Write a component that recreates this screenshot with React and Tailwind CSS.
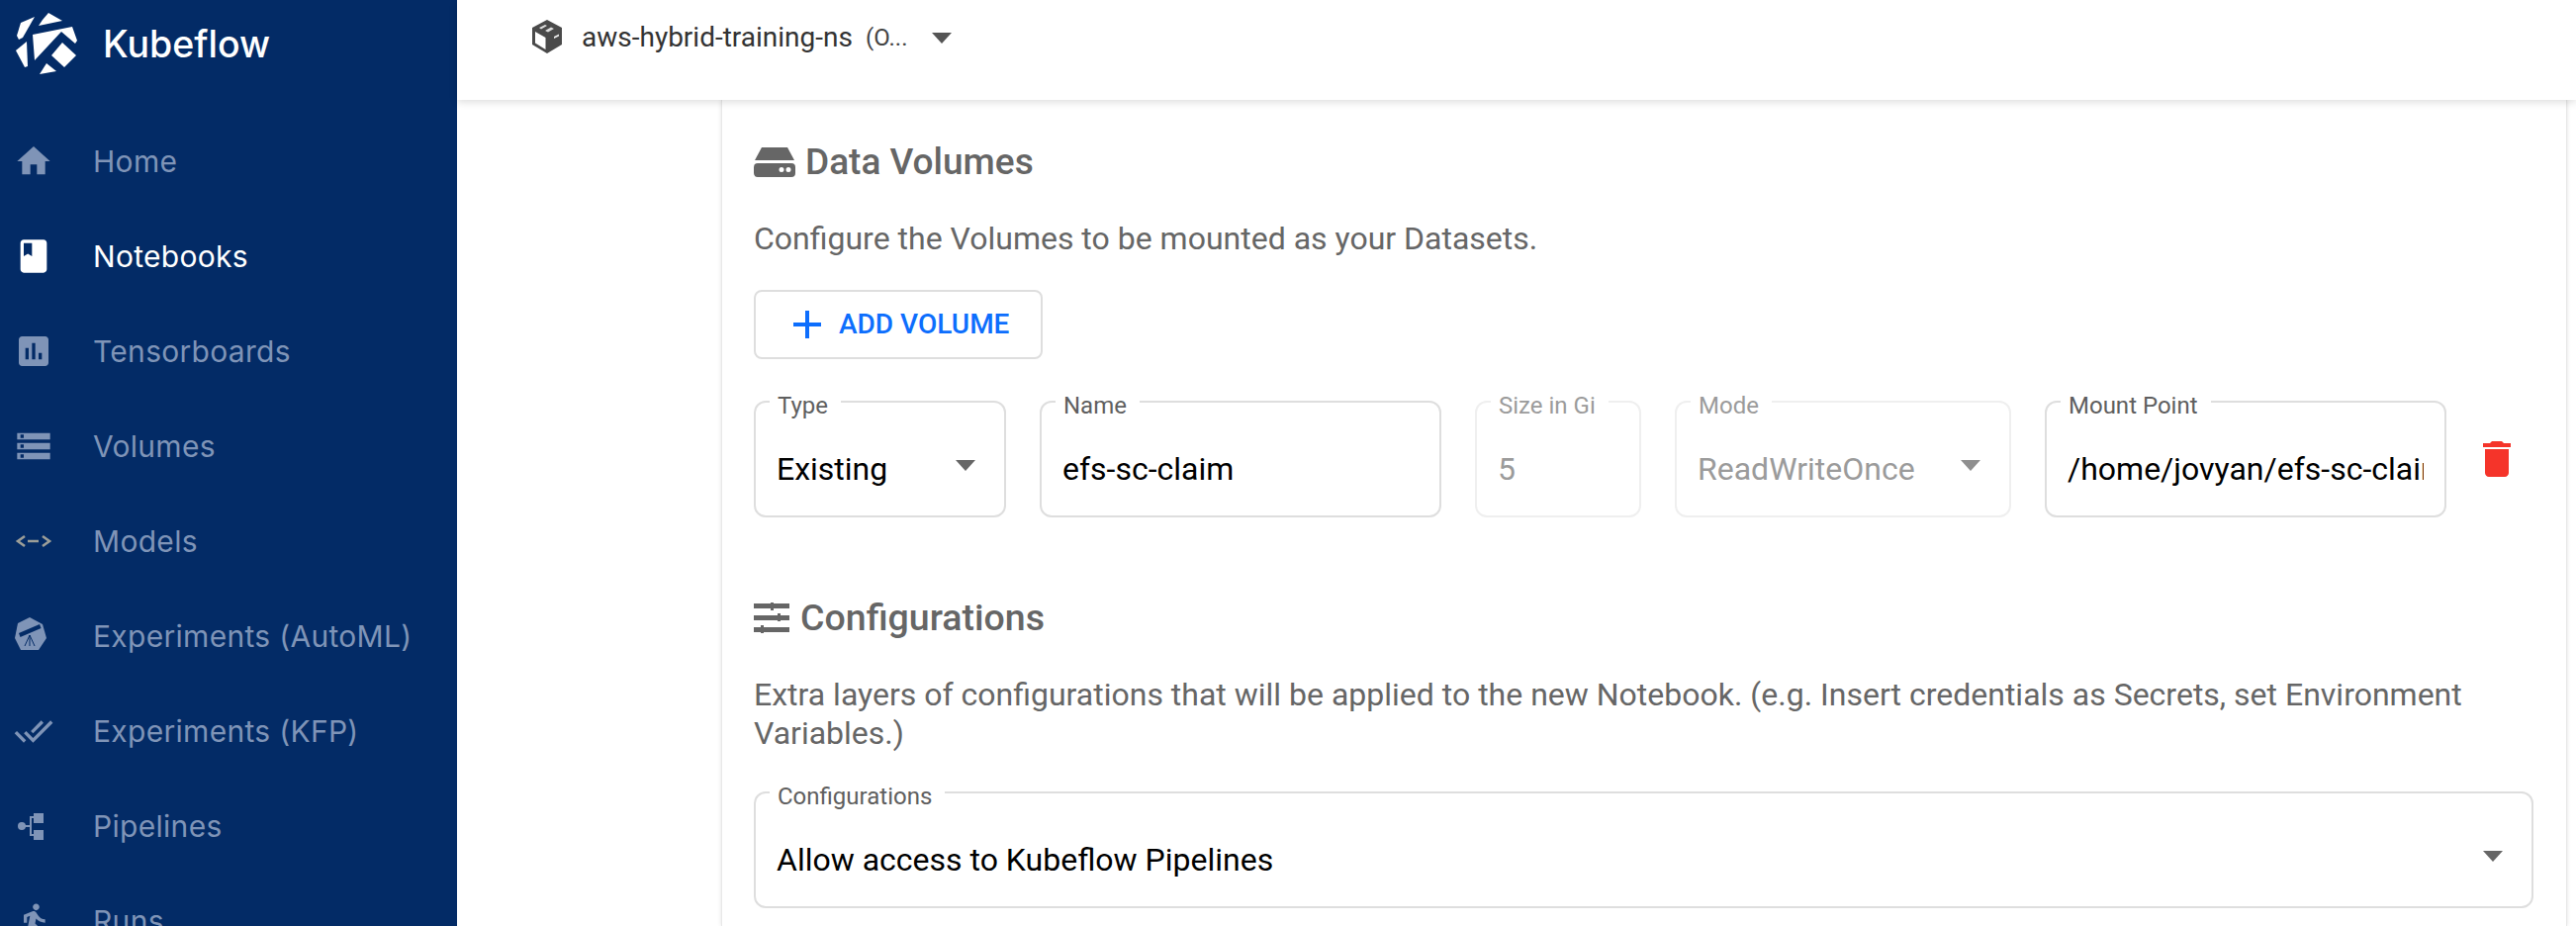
const navItems = [
  { label: 'Home', icon: 'home' },
  { label: 'Notebooks', icon: 'book', active: true },
  { label: 'Tensorboards', icon: 'assessment' },
  { label: 'Volumes', icon: 'storage' },
  { label: 'Models', icon: 'models' },
  { label: 'Experiments (AutoML)', icon: 'telescope' },
  { label: 'Experiments (KFP)', icon: 'doneAll' },
  { label: 'Pipelines', icon: 'pipelines' },
  { label: 'Runs', icon: 'walk' },
]

function NavIcon({ name }) {
  if (name === 'home') return <svg viewBox="0 0 24 24" fill="currentColor" className="w-10 h-10"><path d="M10 20v-6h4v6h5v-8h3L12 3 2 12h3v8z" /></svg>
  if (name === 'book') return <svg viewBox="0 0 24 24" fill="currentColor" fillRule="evenodd" className="w-10 h-10"><path d="M18 2H6c-1.1 0-2 .9-2 2v16c0 1.1.9 2 2 2h12c1.1 0 2-.9 2-2V4c0-1.1-.9-2-2-2zM6 4h5v8l-2.5-1.5L6 12V4z" /></svg>
  if (name === 'assessment') return <svg viewBox="0 0 24 24" fill="currentColor" className="w-10 h-10"><path d="M19 3H5c-1.1 0-2 .9-2 2v14c0 1.1.9 2 2 2h14c1.1 0 2-.9 2-2V5c0-1.1-.9-2-2-2zM9 17H7v-7h2v7zm4 0h-2V7h2v10zm4 0h-2v-4h2v4z" /></svg>
  if (name === 'storage') return <svg viewBox="0 0 24 24" fill="currentColor" className="w-10 h-10"><path d="M2 20h20v-4H2v4zm2-3h2v2H4v-2zM2 4v4h20V4H2zm4 3H4V5h2v2zm-4 7h20v-4H2v4zm2-3h2v2H4v-2z" /></svg>
  if (name === 'models') {
    return (
      <svg viewBox="0 0 40 40" fill="none" stroke="#9c9e98" strokeWidth="2.6" className="w-10 h-10">
        <path d="M11 15l-7 5 7 5M14 20h11M29 15l7 5-7 5" />
      </svg>
    )
  }
  if (name === 'telescope') {
    return (
      <svg viewBox="0 0 40 40" className="w-10 h-10">
        <path d="M16 1l13 7 4 14-8 12H7L1 22 4 7z" fill="currentColor" />
        <path d="M5 17l21-9 1.500 4-21 9z" fill="#032b66" />
        <path d="M16 19l-5 11M16 19v11M16 19l5 11" stroke="#032b66" strokeWidth="1" fill="none" />
      </svg>
    )
  }
  if (name === 'doneAll') return <svg viewBox="0 0 24 24" fill="currentColor" className="w-10 h-10"><path d="M18 7l-1.41-1.41-6.34 6.34 1.41 1.41L18 7zm4.24-1.41L11.66 16.17 7.48 12l-1.41 1.41L11.66 19l12-12-1.42-1.41zM.41 13.41L6 19l1.41-1.41L1.83 12 .41 13.41z" /></svg>
  if (name === 'pipelines') {
    return (
      <svg viewBox="0 0 40 40" fill="currentColor" className="w-10 h-10">
        <circle cx="8" cy="20" r="4" />
        <path d="M20 7h10v10H20zM20 24h10v10H20z" />
        <path d="M10 19h6v-9h5v2h-3v16h3v2h-5v-9h-6z" />
      </svg>
    )
  }
  return <svg viewBox="0 0 24 24" fill="currentColor" className="w-10 h-10"><path d="M13.49 5.48c1.1 0 2-.9 2-2s-.9-2-2-2-2 .9-2 2 .9 2 2 2zm-3.6 13.9l1-4.4 2.1 2v6h2v-7.5l-2.1-2 .6-3c1.3 1.5 3.3 2.5 5.5 2.5v-2c-1.9 0-3.5-1-4.3-2.4l-1-1.6c-.4-.6-1-1-1.7-1-.3 0-.5.1-.8.1l-5.2 2.2v4.7h2v-3.4l1.8-.7-1.6 8.1-4.9-1-.4 2 7 1.4z" /></svg>
}

function Logo() {
  return (
    <svg viewBox="0 0 75 72" fill="#fff" className="w-[75px] h-[72px]">
      <path d="M7 28l4-13 14-6-12 21-4 2z" />
      <path d="M39 5l14 8-24 5 4-6z" />
      <path d="M6 43l11-9 1 25-3 1z" />
      <path d="M23 27l40-8 5 14-2 3-14-12-27 29z" />
      <path d="M53 35l14 13-12 12-13-12z" />
      <path d="M37 56l10 8-17 3z" />
    </svg>
  )
}

function Sidebar() {
  return (
    <aside className="w-[462px] shrink-0 bg-[#032b66] font-['Inter',sans-serif]">
      <div className="h-[115px] pl-[10px] pt-[8px] flex items-start">
        <Logo />
        <span className="ml-[19px] mt-[13px] text-[37.500px] leading-[48px] font-medium text-white">Kubeflow</span>
      </div>
      {navItems.map((item) => (
        <div key={item.label} className={`h-[96px] flex items-center pl-[14px] ${item.active ? 'text-white' : 'text-[#7f94b7]'}`}>
          <NavIcon name={item.icon} />
          <span className="ml-[40px] text-[30px] tracking-[0.3px]">{item.label}</span>
        </div>
      ))}
    </aside>
  )
}

function Caret({ className }) {
  return <div className={`w-0 h-0 shrink-0 border-x-[10px] border-x-transparent border-t-[11px] ${className}`} />
}

function Field({ label, value, select, disabled, className }) {
  return (
    <fieldset className={`h-[133px] min-w-0 border-2 rounded-[12px] px-[21px] flex items-center ${disabled ? 'border-[#efefef]' : 'border-[#dedede]'} ${className}`}>
      <legend className={`ml-[-7px] pl-[8px] pr-[13px] pt-[8px] text-[24px] leading-[24px] ${disabled ? 'text-[#9b9b9b]' : 'text-[#5f5f5f]'}`}>{label}</legend>
      <div className="flex-1 min-w-0 pt-[4px] flex items-center justify-between">
        <input
          readOnly
          value={value}
          className={`flex-1 min-w-0 text-[32px] leading-[40px] outline-none ${disabled ? 'text-[#9b9b9b]' : 'text-black'}`}
        />
        {select && <Caret className={`mb-[7px] mr-[8px] ${disabled ? 'border-t-[#8f8f8f]' : 'border-t-[#666]'}`} />}
      </div>
    </fieldset>
  )
}

export default function App() {
  return (
    <div className="h-[936px] flex overflow-hidden bg-white font-['Roboto',sans-serif]">
      <Sidebar />
      <main className="flex-1 min-w-0 flex flex-col">
        <header className="h-[101px] shrink-0 z-10 bg-white shadow-[0_2px_8px_rgba(0,0,0,0.14)] pl-[75px] pt-[21px]">
          <div className="flex items-center h-[34px]">
            <svg viewBox="0 0 32 34" className="w-[32px] h-[34px] -mt-[2px]">
              <path d="M16 0l15 8v17l-15 9-15-9V8z" fill="#4a4a4a" />
              <path d="M4 12l10.500 6v12L4 23.500z" fill="#fff" />
              <path d="M8 8l6-3 2 1-6 3.500zM14 11l6-3.500 3 1.500-6 3.500z" fill="#ddd" />
              <path d="M23 17l5-2.500v2l-5 2.500z" fill="#eee" />
            </svg>
            <span className="ml-[19px] text-[28px] text-[#333]">aws-hybrid-training-ns</span>
            <span className="ml-[13px] text-[24px] text-[#444]">(O...</span>
            <Caret className="ml-[25px] border-t-[#555]" />
          </div>
        </header>
        <div className="flex-1 min-h-0 pl-[267px] pr-[9px]">
          <section className="h-full bg-white border-x border-[#e8e8e8] shadow-[0_0_4px_rgba(0,0,0,0.12)] pt-[41px] pl-[32px] pr-[33px]">
            <h2 className="h-[44px] flex items-center text-[37px] font-medium text-[#666]">
              <svg viewBox="0 0 42 30" fill="#666" className="w-[42px] h-[30px] mr-[10px]">
                <path d="M8 0h26l7 13H1z" />
                <path fillRule="evenodd" d="M4 16h34a4 4 0 0 1 4 4v6a4 4 0 0 1-4 4H4a4 4 0 0 1-4-4v-6a4 4 0 0 1 4-4zm24 9a2.500 2.500 0 1 0 0-5 2.500 2.500 0 0 0 0 5zm7 0a2.500 2.500 0 1 0 0-5 2.500 2.500 0 0 0 0 5z" />
              </svg>
              Data Volumes
            </h2>
            <p className="mt-[36px] text-[32px] leading-[39px] text-[#666]">Configure the Volumes to be mounted as your Datasets.</p>
            <button className="mt-[32px] w-[292px] h-[70px] border-2 border-[#dedede] rounded-[8px] flex items-center pl-[38px] text-[28px] font-medium text-[#0d6efd]">
              <svg viewBox="5 5 14 14" fill="currentColor" className="w-[28px] h-[28px] mr-[18px]"><path d="M19 13h-6v6h-2v-6H5v-2h6V5h2v6h6v2z" /></svg>
              ADD VOLUME
            </button>
            <div className="mt-[27px] flex items-center">
              <Field label="Type" value="Existing" select className="w-[255px]" />
              <Field label="Name" value="efs-sc-claim" className="w-[406px] ml-[34px]" />
              <Field label="Size in Gi" value="5" disabled className="w-[168px] ml-[34px]" />
              <Field label="Mode" value="ReadWriteOnce" select disabled className="w-[340px] ml-[34px]" />
              <Field label="Mount Point" value="/home/jovyan/efs-sc-claim" className="w-[406px] ml-[34px]" />
              <svg viewBox="0 0 24 24" fill="#f5342a" className="w-12 h-12 ml-[27px] mt-[14px]"><path d="M6 19c0 1.100.9 2 2 2h8c1.100 0 2-.9 2-2V7H6v12zM19 4h-3.500l-1-1h-5l-1 1H5v2h14V4z" /></svg>
            </div>
            <h2 className="mt-[79px] h-[44px] flex items-center text-[37.500px] font-medium text-[#666]">
              <svg viewBox="0 0 36 31" fill="currentColor" className="w-9 h-[31px] mr-[11px]">
                <path d="M0 1h36v5H0zM0 13h36v5H0zM0 25h36v5H0z" />
                <path d="M17 0h3v8h-3zM24 11h3v8h-3zM7 23h3v8H7z" />
              </svg>
              Configurations
            </h2>
            <p className="mt-[37px] text-[32px] leading-[39px] text-[#666]">
              Extra layers of configurations that will be applied to the new Notebook. (e.g. Insert credentials as Secrets, set Environment Variables.)
            </p>
            <div className="mt-[24px]">
              <Field label="Configurations" value="Allow access to Kubeflow Pipelines" select />
            </div>
          </section>
        </div>
      </main>
    </div>
  )
}
